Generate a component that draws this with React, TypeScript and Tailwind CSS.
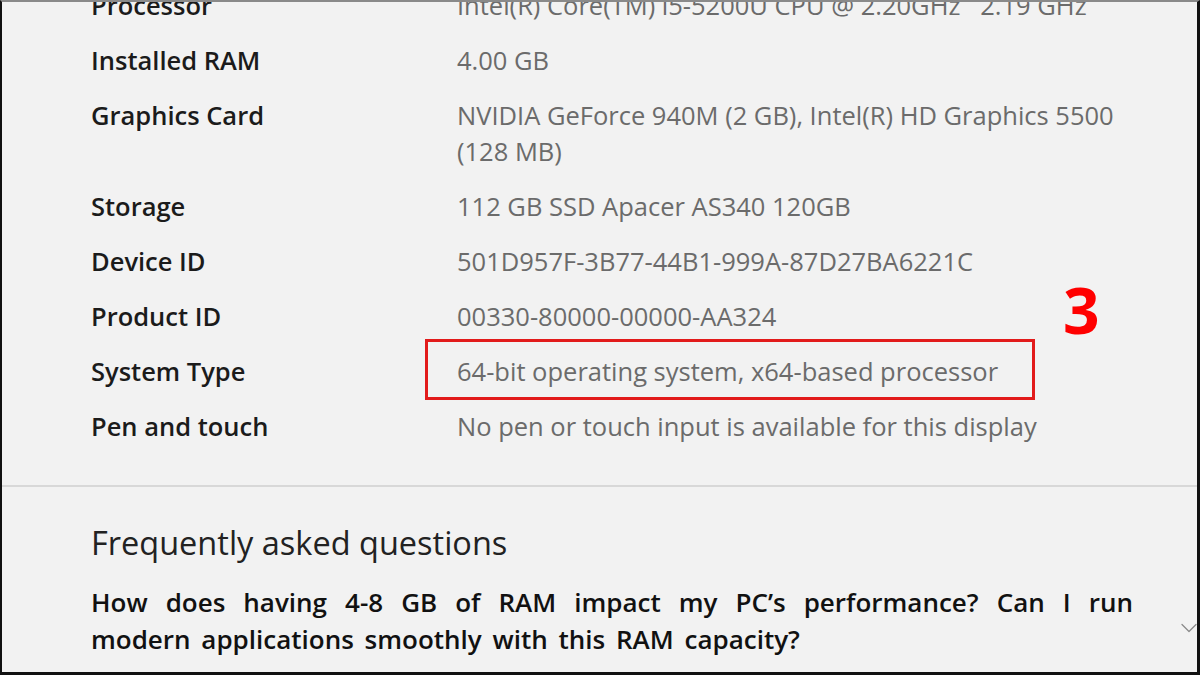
import { ChevronDown } from 'lucide-react';

const specs: { label: string; value: string[]; boxed?: boolean }[] = [
  { label: 'Processor', value: ['Intel(R) Core(TM) i5-5200U CPU @ 2.20GHz   2.19 GHz'] },
  { label: 'Installed RAM', value: ['4.00 GB'] },
  { label: 'Graphics Card', value: ['NVIDIA GeForce 940M (2 GB), Intel(R) HD Graphics 5500', '(128 MB)'] },
  { label: 'Storage', value: ['112 GB SSD Apacer AS340 120GB'] },
  { label: 'Device ID', value: ['501D957F-3B77-44B1-999A-87D27BA6221C'] },
  { label: 'Product ID', value: ['00330-80000-00000-AA324'] },
  { label: 'System Type', value: ['64-bit operating system, x64-based processor'], boxed: true },
  { label: 'Pen and touch', value: ['No pen or touch input is available for this display'] },
];

export default function App() {
  return (
    <div className="relative w-[1200px] h-[675px] overflow-hidden bg-[#f2f2f2] border-t-2 border-t-[#8a8a8a] border-l-2 border-l-[#111] border-r-[3px] border-r-[#111] border-b-[3px] border-b-[#111] font-['Open_Sans',sans-serif] flex flex-col">
      {/* Specs list */}
      <div className="-mt-[15px] pl-[89px] flex flex-col gap-[19px]">
        {specs.map((s) => (
          <div key={s.label} className="flex text-[25.5px] leading-[36px]">
            <div className="w-[366px] shrink-0 font-semibold text-[#1b1b1b]">{s.label}</div>
            <div className="relative text-[#6b6b6b] whitespace-pre">
              {s.value.map((v) => (
                <div key={v}>{v}</div>
              ))}
              {s.boxed && (
                <>
                  <div className="absolute -left-[32px] -top-[14px] w-[610px] h-[61px] border-[3px] border-[#e21b1b]" />
                  <div className="absolute left-[606px] -top-[75px] text-[#ff0000] text-[64px] leading-none font-bold">3</div>
                </>
              )}
            </div>
          </div>
        ))}
      </div>

      <div className="mt-[41px] h-[2px] bg-[#d8d8d8]" />

      {/* FAQ */}
      <div className="pl-[89px] pr-[64px] pt-[36px]">
        <h2 className="text-[32.5px] leading-[40px] font-normal text-[#222]">Frequently asked questions</h2>
        <p className="mt-[21px] text-[26px] leading-[37px] font-semibold text-[#111] text-justify [word-spacing:4px]">
          How does having 4-8 GB of RAM impact my PC’s performance? Can I run modern applications smoothly with this RAM capacity?
        </p>
      </div>
      <ChevronDown className="absolute left-[1173px] top-[612px] text-[#8a8a8a]" size={28} strokeWidth={1.1} />
    </div>
  );
}
